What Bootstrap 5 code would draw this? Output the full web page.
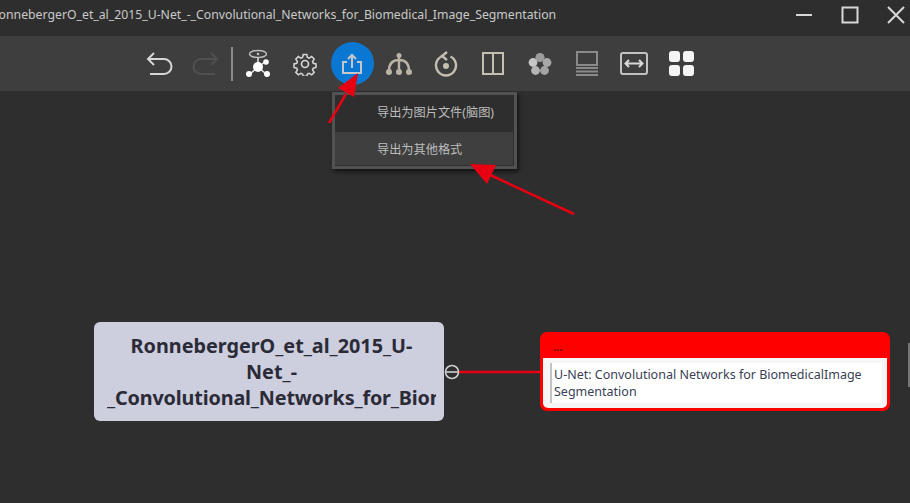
<!DOCTYPE html>
<html lang="zh">
<head>
  <meta charset="UTF-8">
  <title>Mind map</title>
  <link href="https://cdn.jsdelivr.net/npm/bootstrap@5.3.3/dist/css/bootstrap.min.css" rel="stylesheet">
  <style>
    html, body { height: 100%; }
    body {
      width: 910px;
      height: 503px;
      overflow: hidden;
      background: #2e2e2e;
      font-family: "Noto Sans", "Noto Sans CJK SC", sans-serif;
    }
    .title-bar { height: 36px; background: #2e2e2e; color: #c9c9c9; font-size: 12.25px; }
    .title-text { margin-left: -9px; margin-top: -6px; white-space: nowrap; }
    .win-btns { margin-right: -9px; flex-shrink: 0; }
    .win-btn { width: 46px; height: 30px; margin-top: -7px; }
    .tool-bar { height: 55px; background: #3e3e3e; padding-left: 135.5px; }
    .tool-btn { width: 47px; height: 55px; }
    .tool-sep { width: 5px; height: 34px; }
    .tool-sep span { display: block; width: 2px; height: 34px; margin-left: 1px; background: #8b8b8b; }
    .tool-active { width: 43px; height: 43px; border-radius: 50%; background: #0a78d2; }
    .map-area { position: relative; height: 412px; }
    .export-menu {
      position: absolute; left: 332px; top: 1px; width: 185px; height: 77px;
      background: #2e2e2e; border: 3px solid #525252;
      box-shadow: 2px 3px 4px rgba(0, 0, 0, .55); color: #bdbdbd; font-size: 12.2px;
    }
    .menu-row { height: 37px; padding-left: 42px; margin-right: 1px; padding-bottom: 0; }
    .menu-row-hover { height: 33px; background: #3f3f3f; padding-top: 4px; }
    .root-node {
      position: absolute; left: 94px; top: 231px; width: 350px; height: 99px;
      background: #cdcede; border-radius: 6px; color: #2b2b38;
      font-size: 19.8px; font-weight: 700; line-height: 26px; padding: 11px 8px 0 13px;
    }
    .root-line { white-space: nowrap; overflow: hidden; }
    .root-clip { letter-spacing: -.15px; }
    .detail-node {
      position: absolute; left: 540px; top: 241px; width: 350px; height: 79px;
      background: #f00; border-radius: 7px; padding: 26px 3px 3px 3px;
    }
    .detail-dots { position: absolute; left: 13px; top: 9px; font-size: 11px; line-height: 12px; color: #5a1010; font-weight: 700; }
    .detail-body { height: 50px; background: #f6f6f6; border-radius: 0 0 5px 5px; padding: 5px 5px 5px 7px; }
    .detail-quote {
      height: 40px; background: #fff; border-left: 2px solid #c4c4c4; padding: 3px 1px 0 2px;
      color: #3a3f55; font-size: 12.5px; line-height: 17px;
    }
    .map-overlay { position: absolute; left: 0; top: -91px; width: 910px; height: 503px; pointer-events: none; }
    .side-thumb { position: absolute; right: 0; top: 252px; width: 2px; height: 44px; background: #777; }
  </style>
</head>
<body>
  <div class="title-bar d-flex justify-content-between align-items-center overflow-hidden">
    <div class="title-text">RonnebergerO_et_al_2015_U-Net_-_Convolutional_Networks_for_Biomedical_Image_Segmentation</div>
    <div class="win-btns d-flex">
      <div class="win-btn d-flex align-items-center justify-content-center">
        <svg width="18" height="18" viewBox="0 0 18 18"><path d="M1 9h16" stroke="#d8d8d8" stroke-width="2"/></svg>
      </div>
      <div class="win-btn d-flex align-items-center justify-content-center">
        <svg width="18" height="18" viewBox="0 0 18 18"><rect x="1.5" y="1.500" width="15" height="15" fill="none" stroke="#d8d8d8" stroke-width="2"/></svg>
      </div>
      <div class="win-btn d-flex align-items-center justify-content-center">
        <svg width="18" height="18" viewBox="0 0 18 18"><path d="M1 1l16 16M17 1L1 17" stroke="#d8d8d8" stroke-width="2"/></svg>
      </div>
    </div>
  </div>

  <div class="tool-bar d-flex align-items-center">
    <div class="tool-btn d-flex align-items-center justify-content-center">
      <svg width="28" height="28" viewBox="0 0 28 28" fill="none" stroke="#d6d6d6" stroke-width="2"><path d="M9 3L3 9l6 6"/><path d="M3 9h16a6 6 0 0 1 0 15H5"/></svg>
    </div>
    <div class="tool-btn d-flex align-items-center justify-content-center">
      <svg width="28" height="28" viewBox="0 0 28 28" fill="none" stroke="#505050" stroke-width="2"><path d="M19 3l6 6-6 6"/><path d="M25 9H9a6 6 0 0 0 0 15h14"/></svg>
    </div>
    <div class="tool-sep"><span></span></div>
    <div class="tool-btn d-flex align-items-center justify-content-center">
      <svg width="28" height="30" viewBox="0 0 28 30"><ellipse cx="14" cy="5" rx="8.500" ry="3.500" fill="none" stroke="#bdbdbd" stroke-width="1.500"/><circle cx="14" cy="5" r="1.300" fill="#bdbdbd"/><path d="M14 9v9M14 18L6 25M14 18l8 7M14 18l7-5" stroke="#e8e8e8" stroke-width="1.500"/><circle cx="14" cy="18" r="5" fill="#fff"/><circle cx="5" cy="25" r="3" fill="#fff"/><circle cx="23" cy="25" r="3" fill="#fff"/><circle cx="22" cy="13" r="2.800" fill="#fff"/></svg>
    </div>
    <div class="tool-btn d-flex align-items-center justify-content-center">
      <svg width="24" height="24" viewBox="0 0 24 24" fill="none" stroke="#d6d6d6" stroke-width="1.700"><circle cx="12" cy="12" r="3.500"/><path d="M10 1.500h4l.7 3.200 1.900.8 2.800-1.800 2.800 2.800-1.800 2.800.8 1.900 3 .7v4l-3 .7-.8 1.900 1.800 2.800-2.800 2.800-2.800-1.800-1.900.8-.7 2.600h-4l-.7-2.600-1.900-.8-2.800 1.800-2.800-2.800 1.800-2.800-.8-1.900-3-.7v-4l3-.7.8-1.900-1.800-2.800 2.800-2.800 2.800 1.800 1.900-.8z" transform="translate(1.200 1.200) scale(.9)"/></svg>
    </div>
    <div class="tool-btn d-flex align-items-center justify-content-center">
      <div class="tool-active d-flex align-items-center justify-content-center">
        <svg width="22" height="22" viewBox="0 0 22 22" fill="none" stroke="#c4c8cc" stroke-width="2"><path d="M6 9H2v11h18V9h-4"/><path d="M11 15V2M7 6l4-4 4 4"/></svg>
      </div>
    </div>
    <div class="tool-btn d-flex align-items-center justify-content-center">
      <svg width="26" height="24" viewBox="0 0 26 24" fill="none" stroke="#b9b4a6" stroke-width="2.400"><path d="M13 3v16M3 19c0-8 4-11 10-11s10 3 10 11"/><circle cx="13" cy="3.500" r="2.500" fill="#b9b4a6" stroke="none"/><circle cx="3" cy="20" r="3" fill="#b9b4a6" stroke="none"/><circle cx="13" cy="20" r="3" fill="#b9b4a6" stroke="none"/><circle cx="23" cy="20" r="3" fill="#b9b4a6" stroke="none"/></svg>
    </div>
    <div class="tool-btn d-flex align-items-center justify-content-center">
      <svg width="24" height="26" viewBox="0 0 24 26" fill="none" stroke="#c4bfb0" stroke-width="2.400"><path d="M7.500 5.500a10 10 0 1 0 9 0"/><path d="M13 1L8 5l5 4"/><circle cx="12" cy="15" r="3" fill="#c4bfb0" stroke="none"/></svg>
    </div>
    <div class="tool-btn d-flex align-items-center justify-content-center">
      <svg width="22" height="23" viewBox="0 0 22 23" fill="none" stroke="#c4bfb0" stroke-width="2"><rect x="1" y="1" width="20" height="21"/><path d="M11 1v21"/></svg>
    </div>
    <div class="tool-btn d-flex align-items-center justify-content-center">
      <svg width="24" height="24" viewBox="0 0 24 24"><circle cx="12" cy="5.500" r="4.600" fill="#9c9c9c"/><circle cx="19" cy="10.500" r="4.400" fill="#a8a8a8"/><circle cx="5" cy="10.500" r="4.400" fill="#c6c6c6"/><circle cx="7.500" cy="18.500" r="4.400" fill="#b4b4b4"/><circle cx="16.500" cy="18.500" r="4.400" fill="#a4a4a4"/></svg>
    </div>
    <div class="tool-btn d-flex align-items-center justify-content-center">
      <svg width="24" height="25" viewBox="0 0 24 25" fill="none" stroke="#8a8a8a" stroke-width="2"><rect x="2" y="1" width="20" height="13"/><path d="M1 17h22M1 20.500h22M1 24h22"/></svg>
    </div>
    <div class="tool-btn d-flex align-items-center justify-content-center">
      <svg width="28" height="24" viewBox="0 0 28 24" fill="none" stroke="#c2c2c2" stroke-width="2"><rect x="1" y="1" width="26" height="21" rx="2"/><path d="M6 11.500h16M9 8l-3.500 3.500L9 15M19 8l3.500 3.500L19 15" stroke="#d8d8d8"/></svg>
    </div>
    <div class="tool-btn d-flex align-items-center justify-content-center">
      <svg width="25" height="25" viewBox="0 0 25 25" fill="#f4f4f4"><rect width="11" height="11" rx="3"/><rect x="14" width="11" height="11" rx="3"/><rect y="14" width="11" height="11" rx="3"/><rect x="14" y="14" width="11" height="11" rx="3"/></svg>
    </div>
  </div>

  <div class="map-area">
    <div class="export-menu">
      <div class="menu-row d-flex align-items-center">导出为图片文件(脑图)</div>
      <div class="menu-row menu-row-hover d-flex align-items-center">导出为其他格式</div>
    </div>

    <div class="root-node text-center">
      <div class="root-line">RonnebergerO_et_al_2015_U-</div>
      <div class="root-line">Net_-</div>
      <div class="root-line root-clip text-start">_Convolutional_Networks_for_Biomedical_Image_Segmentation</div>
    </div>

    <div class="detail-node">
      <div class="detail-dots">...</div>
      <div class="detail-body">
        <div class="detail-quote">U-Net: Convolutional Networks for BiomedicalImage Segmentation</div>
      </div>
    </div>

    <svg class="map-overlay" viewBox="0 0 910 503">
      <path d="M459 372H541" stroke="#e60012" stroke-width="2.500"/>
      <circle cx="452" cy="372" r="6.500" fill="#2e2e2e" stroke="#d0d0d0" stroke-width="1.600"/>
      <path d="M446 372h12" stroke="#d0d0d0" stroke-width="1.600"/>
      <path d="M329 123L346 94" stroke="#e60012" stroke-width="2.500"/>
      <polygon points="358,73 338,88 354,97" fill="#e60012"/>
      <path d="M574 214L488 174" stroke="#e60012" stroke-width="2.500"/>
      <polygon points="470,164 496,165 487,184" fill="#e60012"/>
    </svg>
    <div class="side-thumb"></div>
  </div>

  <script src="https://cdn.jsdelivr.net/npm/bootstrap@5.3.3/dist/js/bootstrap.bundle.min.js"></script>
</body>
</html>
